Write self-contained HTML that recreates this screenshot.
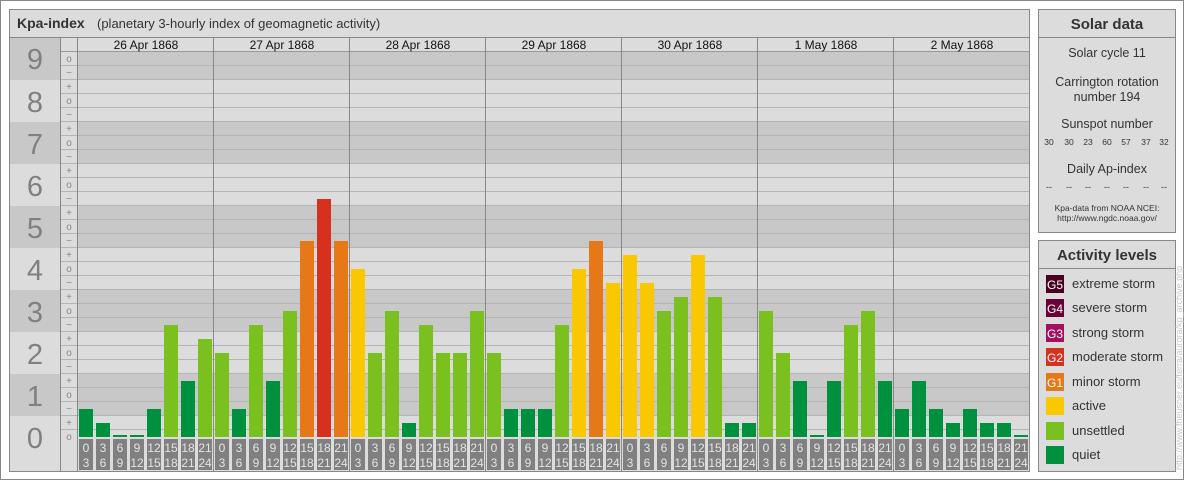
<!DOCTYPE html>
<html><head><meta charset="utf-8"><style>
body{margin:0;background:#fff;}
svg{display:block;font-family:"Liberation Sans",sans-serif;}
</style></head><body>
<svg width="1184" height="480" xmlns="http://www.w3.org/2000/svg">
<rect x="0.5" y="0.5" width="1183" height="479" fill="#fff" stroke="#888"/>
<!-- main panel -->
<rect x="9.5" y="9.5" width="1020" height="462" fill="#dcdcdc" stroke="#888"/>
<line x1="10" y1="37.5" x2="1029" y2="37.5" stroke="#888"/>
<text x="17" y="28" font-size="14" font-weight="bold" fill="#333">Kpa-index</text>
<text x="97" y="28" font-size="13" fill="#333">(planetary 3-hourly index of geomagnetic activity)</text>
<!-- number column bands -->
<g fill="#c8c8c8">
<rect x="10" y="38" width="50" height="42"/>
<rect x="10" y="122" width="50" height="42"/>
<rect x="10" y="206" width="50" height="42"/>
<rect x="10" y="290" width="50" height="42"/>
<rect x="10" y="374" width="50" height="42"/>
</g>
<!-- plot bands dark -->
<g fill="#c8c8c8">
<rect x="78" y="51" width="951" height="29"/>
<rect x="78" y="122" width="951" height="42"/>
<rect x="78" y="206" width="951" height="42"/>
<rect x="78" y="290" width="951" height="42"/>
<rect x="78" y="374" width="951" height="42"/>
</g>
<!-- sub lines -->
<g stroke="#b4b4b4" stroke-width="1">
<line x1="61" y1="51.5" x2="1029" y2="51.5" stroke="#999"/>
<line x1="61" y1="65.5" x2="1029" y2="65.5"/><line x1="61" y1="79.5" x2="1029" y2="79.5"/>
<line x1="61" y1="93.5" x2="1029" y2="93.5"/><line x1="61" y1="107.5" x2="1029" y2="107.5"/>
<line x1="61" y1="121.5" x2="1029" y2="121.5"/><line x1="61" y1="135.5" x2="1029" y2="135.5"/>
<line x1="61" y1="149.5" x2="1029" y2="149.5"/><line x1="61" y1="163.5" x2="1029" y2="163.5"/>
<line x1="61" y1="177.5" x2="1029" y2="177.5"/><line x1="61" y1="191.5" x2="1029" y2="191.5"/>
<line x1="61" y1="205.5" x2="1029" y2="205.5"/><line x1="61" y1="219.5" x2="1029" y2="219.5"/>
<line x1="61" y1="233.5" x2="1029" y2="233.5"/><line x1="61" y1="247.5" x2="1029" y2="247.5"/>
<line x1="61" y1="261.5" x2="1029" y2="261.5"/><line x1="61" y1="275.5" x2="1029" y2="275.5"/>
<line x1="61" y1="289.5" x2="1029" y2="289.5"/><line x1="61" y1="303.5" x2="1029" y2="303.5"/>
<line x1="61" y1="317.5" x2="1029" y2="317.5"/><line x1="61" y1="331.5" x2="1029" y2="331.5"/>
<line x1="61" y1="345.5" x2="1029" y2="345.5"/><line x1="61" y1="359.5" x2="1029" y2="359.5"/>
<line x1="61" y1="373.5" x2="1029" y2="373.5"/><line x1="61" y1="387.5" x2="1029" y2="387.5"/>
<line x1="61" y1="401.5" x2="1029" y2="401.5"/><line x1="61" y1="415.5" x2="1029" y2="415.5"/>
<line x1="61" y1="429.5" x2="1029" y2="429.5"/>
</g>
<!-- vertical separators -->
<g stroke="#888">
<line x1="60.5" y1="38" x2="60.5" y2="471"/>
<line x1="77.5" y1="38" x2="77.5" y2="471"/>
<line x1="213.5" y1="38" x2="213.5" y2="471"/>
<line x1="349.5" y1="38" x2="349.5" y2="471"/>
<line x1="485.5" y1="38" x2="485.5" y2="471"/>
<line x1="621.5" y1="38" x2="621.5" y2="471"/>
<line x1="757.5" y1="38" x2="757.5" y2="471"/>
<line x1="893.5" y1="38" x2="893.5" y2="471"/>
</g>
<!-- dates -->
<g font-size="12" fill="#111" text-anchor="middle">
<text x="146" y="49">26 Apr 1868</text><text x="282" y="49">27 Apr 1868</text>
<text x="418" y="49">28 Apr 1868</text><text x="554" y="49">29 Apr 1868</text>
<text x="690" y="49">30 Apr 1868</text><text x="826" y="49">1 May 1868</text>
<text x="962" y="49">2 May 1868</text>
</g>
<!-- big numbers -->
<g font-size="29" fill="#808080" text-anchor="middle">
<text x="35" y="69">9</text><text x="35" y="112">8</text><text x="35" y="154">7</text>
<text x="35" y="196">6</text><text x="35" y="238">5</text><text x="35" y="280">4</text>
<text x="35" y="322">3</text><text x="35" y="364">2</text><text x="35" y="406">1</text>
<text x="35" y="448">0</text>
</g>
<!-- signs -->
<g font-size="10" fill="#888" text-anchor="middle">
<text x="69" y="62">o</text><text x="69" y="76">−</text>
<text x="69" y="90">+</text><text x="69" y="104">o</text><text x="69" y="118">−</text>
<text x="69" y="132">+</text><text x="69" y="146">o</text><text x="69" y="160">−</text>
<text x="69" y="174">+</text><text x="69" y="188">o</text><text x="69" y="202">−</text>
<text x="69" y="216">+</text><text x="69" y="230">o</text><text x="69" y="244">−</text>
<text x="69" y="258">+</text><text x="69" y="272">o</text><text x="69" y="286">−</text>
<text x="69" y="300">+</text><text x="69" y="314">o</text><text x="69" y="328">−</text>
<text x="69" y="342">+</text><text x="69" y="356">o</text><text x="69" y="370">−</text>
<text x="69" y="384">+</text><text x="69" y="398">o</text><text x="69" y="412">−</text>
<text x="69" y="426">+</text><text x="69" y="440">o</text>
</g>
<!-- bars -->
<g>
<rect x="79" y="409" width="14" height="28" fill="#00913f"/>
<rect x="96" y="423" width="14" height="14" fill="#00913f"/>
<rect x="113" y="435" width="14" height="2" fill="#00913f"/>
<rect x="130" y="435" width="14" height="2" fill="#00913f"/>
<rect x="147" y="409" width="14" height="28" fill="#00913f"/>
<rect x="164" y="325" width="14" height="112" fill="#7ac11f"/>
<rect x="181" y="381" width="14" height="56" fill="#00913f"/>
<rect x="198" y="339" width="14" height="98" fill="#7ac11f"/>

<rect x="215" y="353" width="14" height="84" fill="#7ac11f"/>
<rect x="232" y="409" width="14" height="28" fill="#00913f"/>
<rect x="249" y="325" width="14" height="112" fill="#7ac11f"/>
<rect x="266" y="381" width="14" height="56" fill="#00913f"/>
<rect x="283" y="311" width="14" height="126" fill="#7ac11f"/>
<rect x="300" y="241" width="14" height="196" fill="#e67817"/>
<rect x="317" y="199" width="14" height="238" fill="#d7301f"/>
<rect x="334" y="241" width="14" height="196" fill="#e67817"/>

<rect x="351" y="269" width="14" height="168" fill="#fac800"/>
<rect x="368" y="353" width="14" height="84" fill="#7ac11f"/>
<rect x="385" y="311" width="14" height="126" fill="#7ac11f"/>
<rect x="402" y="423" width="14" height="14" fill="#00913f"/>
<rect x="419" y="325" width="14" height="112" fill="#7ac11f"/>
<rect x="436" y="353" width="14" height="84" fill="#7ac11f"/>
<rect x="453" y="353" width="14" height="84" fill="#7ac11f"/>
<rect x="470" y="311" width="14" height="126" fill="#7ac11f"/>

<rect x="487" y="353" width="14" height="84" fill="#7ac11f"/>
<rect x="504" y="409" width="14" height="28" fill="#00913f"/>
<rect x="521" y="409" width="14" height="28" fill="#00913f"/>
<rect x="538" y="409" width="14" height="28" fill="#00913f"/>
<rect x="555" y="325" width="14" height="112" fill="#7ac11f"/>
<rect x="572" y="269" width="14" height="168" fill="#fac800"/>
<rect x="589" y="241" width="14" height="196" fill="#e67817"/>
<rect x="606" y="283" width="14" height="154" fill="#fac800"/>

<rect x="623" y="255" width="14" height="182" fill="#fac800"/>
<rect x="640" y="283" width="14" height="154" fill="#fac800"/>
<rect x="657" y="311" width="14" height="126" fill="#7ac11f"/>
<rect x="674" y="297" width="14" height="140" fill="#7ac11f"/>
<rect x="691" y="255" width="14" height="182" fill="#fac800"/>
<rect x="708" y="297" width="14" height="140" fill="#7ac11f"/>
<rect x="725" y="423" width="14" height="14" fill="#00913f"/>
<rect x="742" y="423" width="14" height="14" fill="#00913f"/>

<rect x="759" y="311" width="14" height="126" fill="#7ac11f"/>
<rect x="776" y="353" width="14" height="84" fill="#7ac11f"/>
<rect x="793" y="381" width="14" height="56" fill="#00913f"/>
<rect x="810" y="435" width="14" height="2" fill="#00913f"/>
<rect x="827" y="381" width="14" height="56" fill="#00913f"/>
<rect x="844" y="325" width="14" height="112" fill="#7ac11f"/>
<rect x="861" y="311" width="14" height="126" fill="#7ac11f"/>
<rect x="878" y="381" width="14" height="56" fill="#00913f"/>

<rect x="895" y="409" width="14" height="28" fill="#00913f"/>
<rect x="912" y="381" width="14" height="56" fill="#00913f"/>
<rect x="929" y="409" width="14" height="28" fill="#00913f"/>
<rect x="946" y="423" width="14" height="14" fill="#00913f"/>
<rect x="963" y="409" width="14" height="28" fill="#00913f"/>
<rect x="980" y="423" width="14" height="14" fill="#00913f"/>
<rect x="997" y="423" width="14" height="14" fill="#00913f"/>
<rect x="1014" y="435" width="14" height="2" fill="#00913f"/>
</g>
<!-- label boxes -->
<g fill="#808080">
<rect x="79" y="439" width="14" height="31"/><rect x="96" y="439" width="14" height="31"/><rect x="113" y="439" width="14" height="31"/><rect x="130" y="439" width="14" height="31"/><rect x="147" y="439" width="14" height="31"/><rect x="164" y="439" width="14" height="31"/><rect x="181" y="439" width="14" height="31"/><rect x="198" y="439" width="14" height="31"/>
<rect x="215" y="439" width="14" height="31"/><rect x="232" y="439" width="14" height="31"/><rect x="249" y="439" width="14" height="31"/><rect x="266" y="439" width="14" height="31"/><rect x="283" y="439" width="14" height="31"/><rect x="300" y="439" width="14" height="31"/><rect x="317" y="439" width="14" height="31"/><rect x="334" y="439" width="14" height="31"/>
<rect x="351" y="439" width="14" height="31"/><rect x="368" y="439" width="14" height="31"/><rect x="385" y="439" width="14" height="31"/><rect x="402" y="439" width="14" height="31"/><rect x="419" y="439" width="14" height="31"/><rect x="436" y="439" width="14" height="31"/><rect x="453" y="439" width="14" height="31"/><rect x="470" y="439" width="14" height="31"/>
<rect x="487" y="439" width="14" height="31"/><rect x="504" y="439" width="14" height="31"/><rect x="521" y="439" width="14" height="31"/><rect x="538" y="439" width="14" height="31"/><rect x="555" y="439" width="14" height="31"/><rect x="572" y="439" width="14" height="31"/><rect x="589" y="439" width="14" height="31"/><rect x="606" y="439" width="14" height="31"/>
<rect x="623" y="439" width="14" height="31"/><rect x="640" y="439" width="14" height="31"/><rect x="657" y="439" width="14" height="31"/><rect x="674" y="439" width="14" height="31"/><rect x="691" y="439" width="14" height="31"/><rect x="708" y="439" width="14" height="31"/><rect x="725" y="439" width="14" height="31"/><rect x="742" y="439" width="14" height="31"/>
<rect x="759" y="439" width="14" height="31"/><rect x="776" y="439" width="14" height="31"/><rect x="793" y="439" width="14" height="31"/><rect x="810" y="439" width="14" height="31"/><rect x="827" y="439" width="14" height="31"/><rect x="844" y="439" width="14" height="31"/><rect x="861" y="439" width="14" height="31"/><rect x="878" y="439" width="14" height="31"/>
<rect x="895" y="439" width="14" height="31"/><rect x="912" y="439" width="14" height="31"/><rect x="929" y="439" width="14" height="31"/><rect x="946" y="439" width="14" height="31"/><rect x="963" y="439" width="14" height="31"/><rect x="980" y="439" width="14" height="31"/><rect x="997" y="439" width="14" height="31"/><rect x="1014" y="439" width="14" height="31"/>
</g>
<g font-size="12" fill="#e4e4e4" text-anchor="middle">
<text x="86" y="452">0</text><text x="86" y="467">3</text><text x="103" y="452">3</text><text x="103" y="467">6</text><text x="120" y="452">6</text><text x="120" y="467">9</text><text x="137" y="452">9</text><text x="137" y="467">12</text><text x="154" y="452">12</text><text x="154" y="467">15</text><text x="171" y="452">15</text><text x="171" y="467">18</text><text x="188" y="452">18</text><text x="188" y="467">21</text><text x="205" y="452">21</text><text x="205" y="467">24</text>
<text x="222" y="452">0</text><text x="222" y="467">3</text><text x="239" y="452">3</text><text x="239" y="467">6</text><text x="256" y="452">6</text><text x="256" y="467">9</text><text x="273" y="452">9</text><text x="273" y="467">12</text><text x="290" y="452">12</text><text x="290" y="467">15</text><text x="307" y="452">15</text><text x="307" y="467">18</text><text x="324" y="452">18</text><text x="324" y="467">21</text><text x="341" y="452">21</text><text x="341" y="467">24</text>
<text x="358" y="452">0</text><text x="358" y="467">3</text><text x="375" y="452">3</text><text x="375" y="467">6</text><text x="392" y="452">6</text><text x="392" y="467">9</text><text x="409" y="452">9</text><text x="409" y="467">12</text><text x="426" y="452">12</text><text x="426" y="467">15</text><text x="443" y="452">15</text><text x="443" y="467">18</text><text x="460" y="452">18</text><text x="460" y="467">21</text><text x="477" y="452">21</text><text x="477" y="467">24</text>
<text x="494" y="452">0</text><text x="494" y="467">3</text><text x="511" y="452">3</text><text x="511" y="467">6</text><text x="528" y="452">6</text><text x="528" y="467">9</text><text x="545" y="452">9</text><text x="545" y="467">12</text><text x="562" y="452">12</text><text x="562" y="467">15</text><text x="579" y="452">15</text><text x="579" y="467">18</text><text x="596" y="452">18</text><text x="596" y="467">21</text><text x="613" y="452">21</text><text x="613" y="467">24</text>
<text x="630" y="452">0</text><text x="630" y="467">3</text><text x="647" y="452">3</text><text x="647" y="467">6</text><text x="664" y="452">6</text><text x="664" y="467">9</text><text x="681" y="452">9</text><text x="681" y="467">12</text><text x="698" y="452">12</text><text x="698" y="467">15</text><text x="715" y="452">15</text><text x="715" y="467">18</text><text x="732" y="452">18</text><text x="732" y="467">21</text><text x="749" y="452">21</text><text x="749" y="467">24</text>
<text x="766" y="452">0</text><text x="766" y="467">3</text><text x="783" y="452">3</text><text x="783" y="467">6</text><text x="800" y="452">6</text><text x="800" y="467">9</text><text x="817" y="452">9</text><text x="817" y="467">12</text><text x="834" y="452">12</text><text x="834" y="467">15</text><text x="851" y="452">15</text><text x="851" y="467">18</text><text x="868" y="452">18</text><text x="868" y="467">21</text><text x="885" y="452">21</text><text x="885" y="467">24</text>
<text x="902" y="452">0</text><text x="902" y="467">3</text><text x="919" y="452">3</text><text x="919" y="467">6</text><text x="936" y="452">6</text><text x="936" y="467">9</text><text x="953" y="452">9</text><text x="953" y="467">12</text><text x="970" y="452">12</text><text x="970" y="467">15</text><text x="987" y="452">15</text><text x="987" y="467">18</text><text x="1004" y="452">18</text><text x="1004" y="467">21</text><text x="1021" y="452">21</text><text x="1021" y="467">24</text>
</g>

<!-- Solar data panel -->
<rect x="1038.5" y="9.5" width="137" height="223" fill="#dcdcdc" stroke="#888"/>
<line x1="1039" y1="37.5" x2="1175" y2="37.5" stroke="#888"/>
<g text-anchor="middle" fill="#333">
<text x="1107" y="29" font-size="15" font-weight="bold">Solar data</text>
<text x="1107" y="57" font-size="12.5">Solar cycle 11</text>
<text x="1107" y="86" font-size="12.5">Carrington rotation</text>
<text x="1107" y="101" font-size="12.5">number 194</text>
<text x="1107" y="128" font-size="12.5">Sunspot number</text>
<g font-size="8.5"><text x="1049" y="145">30</text><text x="1069" y="145">30</text><text x="1088" y="145">23</text><text x="1107" y="145">60</text><text x="1126" y="145">57</text><text x="1146" y="145">37</text><text x="1164" y="145">32</text></g>
<text x="1107" y="173" font-size="12.5">Daily Ap-index</text>
<g font-size="9"><text x="1049" y="190">--</text><text x="1069" y="190">--</text><text x="1088" y="190">--</text><text x="1107" y="190">--</text><text x="1126" y="190">--</text><text x="1146" y="190">--</text><text x="1164" y="190">--</text></g>
<text x="1107" y="211" font-size="8.5">Kpa-data from NOAA NCEI:</text>
<text x="1107" y="221" font-size="8.5">http://www.ngdc.noaa.gov/</text>
</g>

<!-- Activity levels panel -->
<rect x="1038.5" y="240.5" width="137" height="231" fill="#dcdcdc" stroke="#888"/>
<line x1="1039" y1="268.5" x2="1175" y2="268.5" stroke="#888"/>
<text x="1107" y="260" font-size="15" font-weight="bold" fill="#333" text-anchor="middle">Activity levels</text>
<rect x="1046" y="275" width="18" height="18" fill="#4a0022"/>
<rect x="1046" y="299" width="18" height="18" fill="#6a0036"/>
<rect x="1046" y="324" width="18" height="18" fill="#a50f60"/>
<rect x="1046" y="348" width="18" height="18" fill="#d7301f"/>
<rect x="1046" y="373" width="18" height="18" fill="#e67817"/>
<rect x="1046" y="397" width="18" height="18" fill="#fac800"/>
<rect x="1046" y="422" width="18" height="18" fill="#7ac11f"/>
<rect x="1046" y="446" width="18" height="18" fill="#00913f"/>
<g font-size="12" fill="#fff" text-anchor="middle">
<text x="1055" y="289">G5</text><text x="1055" y="313">G4</text><text x="1055" y="338">G3</text><text x="1055" y="362">G2</text><text x="1055" y="387">G1</text>
</g>
<g font-size="13" fill="#333">
<text x="1072" y="288">extreme storm</text>
<text x="1072" y="312">severe storm</text>
<text x="1072" y="337">strong storm</text>
<text x="1072" y="361">moderate storm</text>
<text x="1072" y="386">minor storm</text>
<text x="1072" y="410">active</text>
<text x="1072" y="435">unsettled</text>
<text x="1072" y="459">quiet</text>
</g>
<text transform="translate(1182,470) rotate(-90)" font-size="9" fill="#c8c8c8">http://www.fheusner.eu/terra/aurora/kp_archive.php</text>
</svg>
</body></html>
